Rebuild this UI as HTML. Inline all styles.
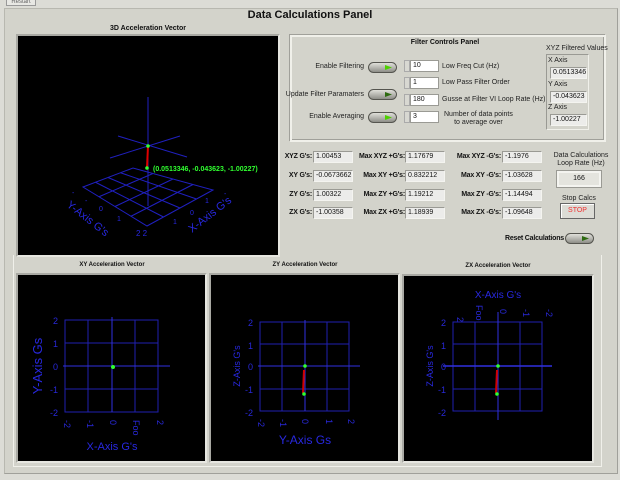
<!DOCTYPE html>
<html><head><style>
*{margin:0;padding:0;box-sizing:border-box}
body{width:620px;height:480px;background:#dcdcd6;position:relative;overflow:hidden;font-family:"Liberation Sans",sans-serif;font-size:7px;color:#111}
.a{position:absolute}
.panel{position:absolute;left:4px;top:8px;width:614px;height:466px;background:#d3d3cb;border:1px solid #b8b8b0;border-right-color:#a0a09a;border-bottom-color:#a0a09a}
.blk{position:absolute;background:#000;border:2px solid #a9a9a3;border-right-color:#e6e6e0;border-bottom-color:#e6e6e0}
.box{position:absolute;background:#ececea;border:1px solid #9a9a94;border-right-color:#f4f4f0;border-bottom-color:#f4f4f0;font-size:7px;padding-left:2px;line-height:10px;height:12px;white-space:nowrap;overflow:hidden}
.lbl{position:absolute;font-weight:bold;font-size:7px;white-space:nowrap;text-align:right;letter-spacing:-0.2px}
.nl{position:absolute;font-size:7px;white-space:nowrap;color:#222}
.tog{position:absolute;width:29px;height:11px;border-radius:6px;background:linear-gradient(#e0e0da,#8e8e88);border:1px solid #55554f}
.tog i{position:absolute;right:4px;top:2px;width:7px;height:5px;background:#4ed000;clip-path:polygon(0 0,100% 50%,0 100%);}
.tog.d i{background:#2d6a10}
.spin{position:absolute;width:6px;height:12px;border:1px solid #aaa;background:#d8d8d2}
.num{position:absolute;width:29px;height:12px;background:#fff;border:1px solid #9a9a94;font-size:7px;padding-left:2px;line-height:10px}
</style></head><body>
<div class="a" style="left:6px;top:-4px;width:30px;height:10px;background:#e8e8e4;border:1px solid #999;font-size:6px;color:#666;text-align:center;line-height:10px">Restart</div>
<div class="panel"></div>
<div class="a" style="left:0;top:9px;width:620px;text-align:center;font-weight:bold;font-size:11px">Data Calculations Panel</div>
<div class="a" style="left:60px;top:25px;width:176px;text-align:center;font-weight:bold;font-size:7px">3D Acceleration Vector</div>
<div class="blk" style="left:16px;top:34px;width:264px;height:223px"></div>
<svg class="a" style="left:0;top:0" width="620" height="480">
<g stroke="#2020c0" stroke-width="1" fill="none">
<polygon points="83,187 133,168 213,190 147,226"/>
<line x1="95.5" y1="182.25" x2="163.5" y2="217"/><line x1="108" y1="177.5" x2="180" y2="208"/><line x1="120.5" y1="172.75" x2="196.5" y2="199"/>
<line x1="99" y1="196.75" x2="153" y2="173.5"/><line x1="115" y1="206.5" x2="173" y2="179"/><line x1="131" y1="216.25" x2="193" y2="184.5"/>
<line x1="148" y1="97" x2="148" y2="206"/>
<line x1="118" y1="136" x2="187" y2="157"/><line x1="110" y1="158" x2="180" y2="136"/>
</g>
<line x1="148" y1="146" x2="147" y2="168" stroke="#e00000" stroke-width="2"/>
<circle cx="148" cy="146" r="1.8" fill="#30ff30"/><circle cx="147" cy="168" r="1.8" fill="#30ff30"/>
<text x="153" y="171" fill="#30ff30" font-size="7" font-weight="bold" font-family="Liberation Sans">(0.0513346, -0.043623, -1.00227)</text>
<g fill="#2828e0" font-family="Liberation Sans">
<text x="66" y="206" font-size="11" transform="rotate(38 66 206)">Y-Axis G's</text>
<text x="192" y="233" font-size="11" transform="rotate(-38 192 233)">X-Axis G's</text>
<text x="99" y="211" font-size="7">0</text><text x="117" y="221" font-size="7">1</text><text x="136" y="236" font-size="8">2 2</text>
<text x="190" y="215" font-size="7">0</text><text x="173" y="224" font-size="7">1</text><text x="205" y="203" font-size="7">1</text><text x="224" y="196" font-size="7">-</text>
<text x="72" y="195" font-size="7">-</text><text x="85" y="203" font-size="7">-</text>
</g>
</svg>

<!-- Filter panel -->
<div class="a" style="left:290px;top:35px;width:316px;height:107px;border:2px solid #f0f0ea;box-shadow:inset -1px -1px 0 #a0a09a,-1px -1px 0 #a0a09a"></div>
<div class="a" style="left:395px;top:39px;width:100px;text-align:center;font-weight:bold;font-size:7px">Filter Controls Panel</div>
<div class="nl" style="right:256px;top:63px">Enable Filtering</div>
<div class="nl" style="right:256px;top:91px">Update Filter Paramaters</div>
<div class="nl" style="right:256px;top:113px">Enable Averaging</div>
<div class="tog" style="left:368px;top:62px"><i></i></div>
<div class="tog d" style="left:368px;top:89px"><i></i></div>
<div class="tog" style="left:368px;top:112px"><i></i></div>
<div class="spin" style="left:404px;top:60px"></div><div class="num" style="left:410px;top:60px">10</div>
<div class="spin" style="left:404px;top:77px"></div><div class="num" style="left:410px;top:77px">1</div>
<div class="spin" style="left:404px;top:94px"></div><div class="num" style="left:410px;top:94px">180</div>
<div class="spin" style="left:404px;top:111px"></div><div class="num" style="left:410px;top:111px">3</div>
<div class="nl" style="left:442px;top:63px">Low Freq Cut (Hz)</div>
<div class="nl" style="left:442px;top:79px">Low Pass Filter Order</div>
<div class="nl" style="left:442px;top:96px">Gusse at Filter VI Loop Rate (Hz)</div>
<div class="nl" style="left:444px;top:111px;text-align:center;line-height:8px">Number of data points<br>to average over</div>
<div class="nl" style="left:546px;top:45px">XYZ Filtered Values</div>
<div class="a" style="left:546px;top:54px;width:43px;height:76px;border:1px solid #9a9a94;border-right-color:#f0f0ea;border-bottom-color:#f0f0ea"></div>
<div class="nl" style="left:548px;top:57px">X Axis</div>
<div class="box" style="left:550px;top:67px;width:37px">0.0513346</div>
<div class="nl" style="left:548px;top:81px">Y Axis</div>
<div class="box" style="left:550px;top:91px;width:37px">-0.043623</div>
<div class="nl" style="left:548px;top:104px">Z Axis</div>
<div class="box" style="left:550px;top:114px;width:37px">-1.00227</div>

<!-- stats -->
<div class="lbl" style="right:308px;top:153px">XYZ G's:</div><div class="box" style="left:313px;top:151px;width:40px">1.00453</div>
<div class="lbl" style="right:308px;top:172px">XY G's:</div><div class="box" style="left:313px;top:170px;width:40px">-0.0673662</div>
<div class="lbl" style="right:308px;top:191px">ZY G's:</div><div class="box" style="left:313px;top:189px;width:40px">1.00322</div>
<div class="lbl" style="right:308px;top:209px">ZX G's:</div><div class="box" style="left:313px;top:207px;width:40px">-1.00358</div>
<div class="lbl" style="right:215px;top:153px">Max XYZ +G's:</div><div class="box" style="left:405px;top:151px;width:40px">1.17679</div>
<div class="lbl" style="right:215px;top:172px">Max XY +G's:</div><div class="box" style="left:405px;top:170px;width:40px">0.832212</div>
<div class="lbl" style="right:215px;top:191px">Max ZY +G's:</div><div class="box" style="left:405px;top:189px;width:40px">1.19212</div>
<div class="lbl" style="right:215px;top:209px">Max ZX +G's:</div><div class="box" style="left:405px;top:207px;width:40px">1.18939</div>
<div class="lbl" style="right:119px;top:153px">Max XYZ -G's:</div><div class="box" style="left:502px;top:151px;width:40px">-1.1976</div>
<div class="lbl" style="right:119px;top:172px">Max XY -G's:</div><div class="box" style="left:502px;top:170px;width:40px">-1.03628</div>
<div class="lbl" style="right:119px;top:191px">Max ZY -G's:</div><div class="box" style="left:502px;top:189px;width:40px">-1.14494</div>
<div class="lbl" style="right:119px;top:209px">Max ZX -G's:</div><div class="box" style="left:502px;top:207px;width:40px">-1.09648</div>
<div class="nl" style="left:548px;top:152px;width:66px;text-align:center;line-height:8px">Data Calculations<br>Loop Rate (Hz)</div>
<div class="a" style="left:557px;top:171px;width:44px;height:16px;background:#e4e4de;border:2px solid #f4f4f0;outline:1px solid #9a9a94;text-align:center;line-height:12px;font-size:7px">166</div>
<div class="nl" style="left:562px;top:195px">Stop Calcs</div>
<div class="a" style="left:560px;top:203px;width:35px;height:16px;background:#dcdcd6;border:1px solid #666;box-shadow:inset 1px 1px 0 #fff;color:#f03030;text-align:center;line-height:14px;font-size:7px">STOP</div>
<div class="lbl" style="right:56px;top:235px">Reset Calculations</div>
<div class="tog d" style="left:565px;top:233px"><i></i></div>

<!-- bottom -->
<div class="a" style="left:13px;top:255px;width:589px;height:212px;border:1px solid #f0f0ea;border-top:none"></div>
<div class="a" style="left:17px;top:262px;width:190px;text-align:center;font-weight:bold;font-size:6px">XY Acceleration Vector</div>
<div class="a" style="left:210px;top:262px;width:190px;text-align:center;font-weight:bold;font-size:6px">ZY Acceleration Vector</div>
<div class="a" style="left:403px;top:263px;width:190px;text-align:center;font-weight:bold;font-size:6px">ZX Acceleration Vector</div>
<div class="blk" style="left:16px;top:273px;width:191px;height:190px"></div>
<div class="blk" style="left:209px;top:273px;width:191px;height:190px"></div>
<div class="blk" style="left:402px;top:274px;width:192px;height:189px"></div>
<svg class="a" style="left:0;top:0" width="620" height="480" font-family="Liberation Sans">
<g stroke="#2020b0" fill="none" stroke-width="1">
<rect x="65" y="320" width="93" height="92"/>
<line x1="88" y1="320" x2="88" y2="412"/><line x1="135" y1="320" x2="135" y2="412"/>
<line x1="65" y1="343" x2="158" y2="343"/><line x1="65" y1="389" x2="158" y2="389"/>
<line x1="112" y1="317" x2="112" y2="412" stroke="#3030e0"/><line x1="63" y1="366" x2="170" y2="366" stroke="#3030e0"/>
<rect x="260" y="322" width="89" height="89"/>
<line x1="282" y1="322" x2="282" y2="411"/><line x1="327" y1="322" x2="327" y2="411"/>
<line x1="260" y1="344" x2="349" y2="344"/><line x1="260" y1="389" x2="349" y2="389"/>
<line x1="305" y1="320" x2="305" y2="411" stroke="#3030e0"/><line x1="258" y1="366" x2="360" y2="366" stroke="#3030e0"/>
<rect x="453" y="322" width="89" height="89"/>
<line x1="475" y1="322" x2="475" y2="411"/><line x1="520" y1="322" x2="520" y2="411"/>
<line x1="453" y1="344" x2="542" y2="344"/><line x1="453" y1="389" x2="542" y2="389"/>
<line x1="498" y1="312" x2="498" y2="420" stroke="#3030e0"/><line x1="443" y1="366" x2="552" y2="366" stroke="#3030e0" stroke-width="1.5"/>
</g>
<line x1="304" y1="370" x2="303" y2="393" stroke="#d00000" stroke-width="2"/>
<line x1="497" y1="370" x2="496" y2="393" stroke="#d00000" stroke-width="2"/>
<circle cx="113" cy="367" r="2" fill="#30ff30"/>
<circle cx="305" cy="366" r="1.8" fill="#30ff30"/><circle cx="304" cy="394" r="1.8" fill="#30ff30"/>
<circle cx="498" cy="366" r="1.8" fill="#30ff30"/><circle cx="497" cy="394" r="1.8" fill="#30ff30"/>
<g fill="#2828d8" font-size="9">
<text x="53" y="324">2</text><text x="53" y="347">1</text><text x="53" y="370">0</text><text x="50" y="393">-1</text><text x="50" y="416">-2</text>
<text x="248" y="326">2</text><text x="248" y="349">1</text><text x="248" y="370">0</text><text x="245" y="393">-1</text><text x="245" y="416">-2</text>
<text x="441" y="326">2</text><text x="441" y="349">1</text><text x="441" y="370">0</text><text x="438" y="393">-1</text><text x="438" y="416">-2</text>
<text x="64" y="420" transform="rotate(90 64 420)">-2</text><text x="87" y="420" transform="rotate(90 87 420)">-1</text><text x="110" y="420" transform="rotate(90 110 420)">0</text><text x="133" y="420" transform="rotate(90 133 420)">Foo</text><text x="157" y="420" transform="rotate(90 157 420)">2</text>
<text x="258" y="419" transform="rotate(90 258 419)">-2</text><text x="280" y="419" transform="rotate(90 280 419)">-1</text><text x="302" y="419" transform="rotate(90 302 419)">0</text><text x="326" y="419" transform="rotate(90 326 419)">1</text><text x="348" y="419" transform="rotate(90 348 419)">2</text>
<text x="457" y="317" transform="rotate(90 457 317)">2</text><text x="476" y="305" transform="rotate(90 476 305)">Foo</text><text x="500" y="309" transform="rotate(90 500 309)">0</text><text x="523" y="309" transform="rotate(90 523 309)">-1</text><text x="546" y="309" transform="rotate(90 546 309)">-2</text>
</g>
<g fill="#2828e0" text-anchor="middle">
<text x="42" y="366" font-size="13" transform="rotate(-90 42 366)">Y-Axis Gs</text>
<text x="112" y="450" font-size="11">X-Axis G's</text>
<text x="305" y="444" font-size="12">Y-Axis Gs</text>
<text x="240" y="366" font-size="9" transform="rotate(-90 240 366)">Z-Axis G's</text>
<text x="498" y="298" font-size="10">X-Axis G's</text>
<text x="433" y="366" font-size="9" transform="rotate(-90 433 366)">Z-Axis G's</text>
</g>
</svg>
</body></html>
